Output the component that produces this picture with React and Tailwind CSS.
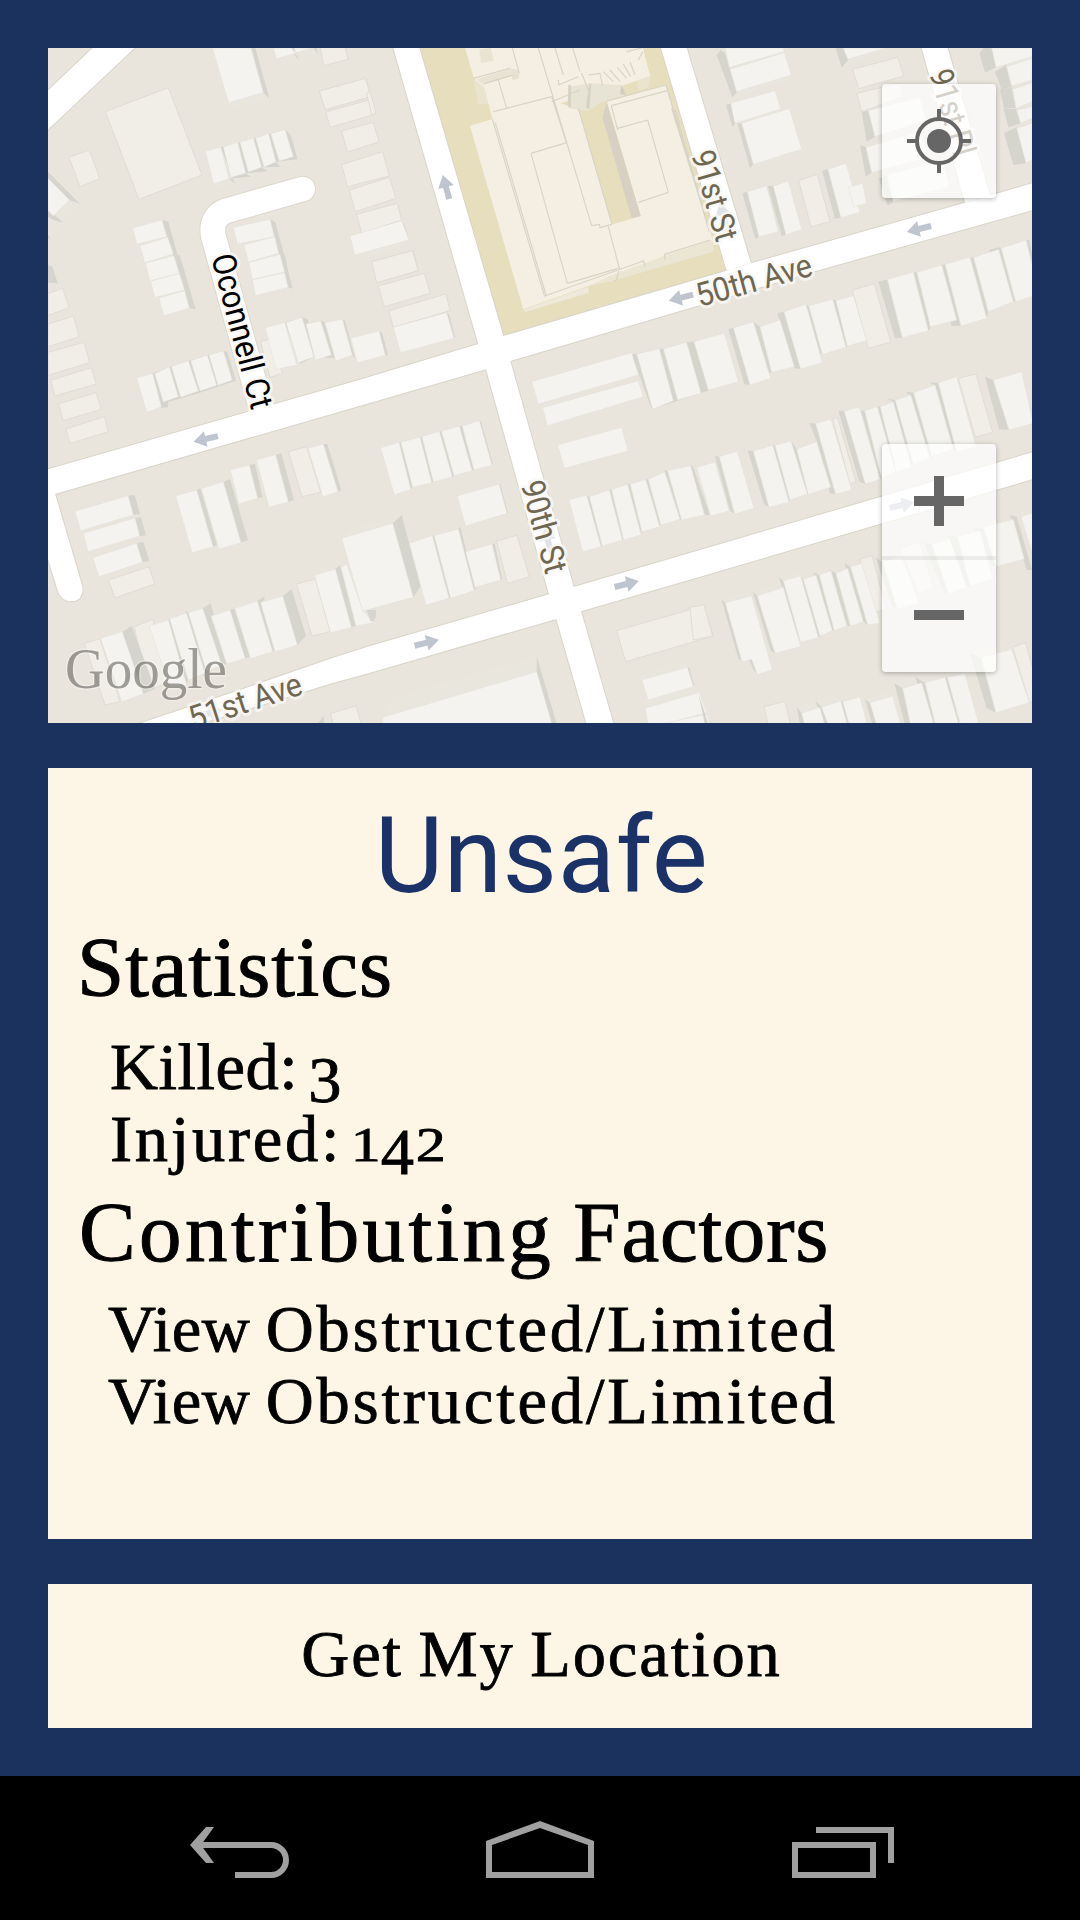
import React from "react";

// Each district is described on its own grid (3 units per pixel) and placed by its origin.
const DISTRICTS = [
  {
    origin: [40, 40],
    flats: [
      "838,153 977,115 992,170 856,209", "857,216 994,178 1008,222 871,262",
      "838,10 912,10 924,58 851,77", "196,215 385,143 486,405 297,478", "87,352 148,330 179,416 120,440",
      "24,760 68,745 88,803 24,826", "24,852 100,829 118,890 24,920", "24,937 132,907 149,968 24,1006",
      "32,1021 154,983 169,1032 45,1068", "996,665 1120,632 1134,692 1010,728",
      "662,905 700,893 727,1000 690,1012",
    ],
    fronts: [
      "566,188 670,158 688,175 582,207", "88,480 120,492 70,548 40,528", "24,530 70,548 30,595 24,590",
      "708,56 768,40 776,60 725,77", "776,40 830,24 834,40 790,56",
      "521,432 760,350 773,358 540,444",
    ],
    shades: [
      "633,24 646,24 688,175 670,158", "550,321 735,268 752,284 773,358 708,366 722,380 665,382 682,394 617,400 632,410 567,416 585,430 542,321",
      "366,540 385,545 413,645 419,646 437,705 450,750 467,808 448,804", "690,538 706,546 731,640 735,646 745,695 758,746 744,742",
      "24,395 120,492 88,480 24,415", "24,510 50,530 70,548 40,540 24,530", "24,675 38,680 53,730 24,728", "24,586 33,597 24,594",
      "755,24 770,24 764,38 779,60 768,52", "820,24 830,24 834,42",
      "734,848 786,832 804,838 806,850 842,842 854,846 884,955 822,950 780,972", "907,838 915,842 945,955 937,945",
      "338,1001 388,980 445,962 502,945 550,932 562,936 588,1022 480,1058 385,1086 384,1102 364,1104",
    ],
    roofs: [
      "517,24 633,24 670,158 566,188", "700,24 752,24 768,40 708,56", "768,38 762,24 818,24 820,24",
      "496,334 542,321 567,416 521,432", "550,321 593,307 617,400 573,412", "600,307 640,294 665,382 625,396", "647,294 686,281 708,366 672,381", "692,281 735,268 760,350 718,363",
      "278,564 366,540 380,590 290,612", "300,617 383,592 400,642 314,668", "316,670 402,647 418,700 330,722", "332,724 418,700 434,750 344,772", "357,774 434,752 448,804 372,827",
      "580,562 690,538 703,590 592,612", "612,615 704,590 716,640 625,666", "627,668 720,643 734,696 637,718", "637,720 734,698 744,742 646,767",
      "24,415 88,480 40,528 24,512",
      "676,863 734,848 770,975 708,988", "738,848 786,832 822,950 775,968", "798,852 842,842 874,945 826,960", "855,848 907,838 937,945 888,963", "933,895 1018,873 1038,945 952,968",
      "290,1013 338,1001 364,1100 320,1117", "344,1001 388,980 415,1070 370,1086", "394,979 445,962 475,1053 422,1072", "452,962 502,945 530,1036 480,1053", "507,945 550,932 577,1020 534,1036",
    ],
  },
  {
    origin: [370, 40],
    flats: [
      "-85,273 10,247 27,306 -68,336", "-85,374 38,335 58,408 -68,440", "-62,450 58,412 78,475 -44,515", "-40,523 82,490 95,540 -25,580",
      "5,665 128,632 144,692 20,728", "25,738 163,700 181,760 43,800", "57,812 228,762 240,812 70,862",
      "-152,153 -13,115 2,170 -134,209", "-10,160 0,156 18,218 5,224",
    ],
    fronts: ["-46,645 117,600 119,608 -40,660"],
    shades: ["95,542 105,556 119,605 117,600", "230,818 237,822 256,892 252,895", "28,875 36,877 54,945 46,946", "785,942 797,942 868,926 878,926 950,907 972,905 1020,1050 915,1085 845,1108"],
    roofs: [
      "-60,588 95,542 117,600 -46,645", "70,862 230,818 252,895 92,938",
      "485,1025 785,938 805,1005 505,1092", "518,1103 805,1022 820,1070 532,1157",
      "800,942 868,926 910,1082 848,1108", "880,926 950,907 993,1060 923,1080",
    ],
  },
  {
    origin: [700, 40],
    flats: [
      "458,88 594,52 611,108 476,146", "470,160 600,130 612,170 485,215", "296,422 352,403 390,545 333,560", "457,750 523,731 572,906 505,925",
    ],
    fronts: ["110,155 274,105 270,118 97,170", "160,373 305,328 300,340 150,385", "443,58 560,24 580,24 425,83", "888,82 996,50 996,62 855,98"],
    shades: [
      "50,45 62,30 75,40 112,155 97,172", "78,195 92,190 105,250 97,262", "112,250 125,250 160,373 150,385", "407,24 430,24 445,60 425,83",
      "485,215 505,212 525,290 500,305", "480,315 498,322 515,398 497,410", "537,415 560,405 580,485 562,497",
      "127,460 142,455 177,590 166,598", "203,438 220,438 258,585 245,588", "366,392 384,388 423,533 405,537",
      "838,40 850,24 875,24 888,82 855,98", "885,95 918,75 935,140 905,150", "900,150 935,142 948,205 912,205", "910,205 948,208 962,250 925,262", "912,280 950,262 978,370 940,375",
      "85,868 100,863 160,845 180,860 215,997 150,1035 133,1033", "232,820 252,815 302,987 283,985", "318,793 325,797 367,943 360,940", "398,778 408,782 442,918 438,922",
      "535,725 562,718 607,893 585,895", "640,697 650,697 694,860 685,872", "725,675 735,673 783,858 755,858 752,845 770,840", "810,652 820,652 865,815 860,835", "866,630 896,622 903,625 945,785 940,785", "978,600 988,600 996,640 996,665", "-28,905 -18,905 25,1050 15,1050",
    ],
    roofs: [
      "75,24 250,24 253,35 88,82", "90,88 253,38 274,105 110,155", "92,190 225,152 242,207 105,250", "125,250 268,205 305,328 160,373", "430,24 560,24 443,58",
      "505,212 660,172 680,240 525,290", "498,322 660,275 690,350 515,398", "560,405 730,360 748,440 580,485",
      "142,455 200,438 235,575 177,590", "220,438 265,423 305,568 258,585", "384,388 438,370 480,517 423,533", "445,442 488,430 500,490 460,500",
      "875,24 996,24 996,50 888,82", "920,80 996,55 996,120 935,138", "938,148 996,128 996,185 948,205", "950,210 996,200 996,235 962,250", "950,265 996,250 996,360 978,368",
      "-18,905 73,880 115,1025 25,1050", "100,863 160,845 212,1015 150,1035", "180,860 240,840 283,980 215,997", "252,815 318,793 367,968 302,987", "327,797 398,778 438,922 367,943", "408,782 460,767 500,902 442,918",
      "562,718 640,697 685,872 607,893", "651,697 725,675 770,840 691,860", "736,673 810,652 860,835 783,858", "821,652 896,628 940,785 865,815", "904,625 978,600 1000,690 1000,768 948,785",
    ],
  },
  {
    origin: [40, 380],
    flats: [
      "55,72 168,38 184,88 70,122", "77,147 193,110 205,155 91,190", "745,215 800,200 842,337 786,350", "206,600 327,560 344,612 224,654",
      "770,612 826,597 870,755 816,768", "133,790 180,776 240,965 195,975", "282,740 338,718 390,905 330,930", "872,1000 948,978 965,1035 880,1035",
    ],
    fronts: ["180,776 275,738 247,755 182,780", "389,716 488,670 512,670 488,685", "823,585 900,550 886,567", "514,708 582,680 570,690", "662,665 755,628 728,648"],
    shades: [
      "264,347 284,344 300,402 280,405", "285,414 303,412 318,466 299,468", "288,490 310,486 328,542 309,547",
      "470,330 482,326 531,496 519,500", "550,305 570,297 624,480 603,488", "628,255 645,252 668,352 653,355", "707,224 724,220 762,360 745,366", "850,192 862,192 904,330 894,335",
      "247,755 275,738 345,925 310,942", "385,720 389,716 445,900 440,915", "436,690 445,698 500,875 490,890", "488,685 512,670 522,705 512,708 560,852 545,855", "570,690 582,685 630,832 615,835",
      "652,663 674,648 672,660 662,668 704,812 698,815", "728,648 755,628 798,768 772,795", "886,567 900,555 948,738 934,742", "985,690 1008,690 1008,712 996,728", "835,1029 850,1008 853,1029",
    ],
    roofs: [
      "105,394 264,347 280,405 122,452", "130,460 285,414 299,468 144,515", "158,533 290,490 307,547 177,590",
      "407,347 470,330 519,500 456,518", "484,326 550,305 603,488 537,507", "571,270 628,255 653,355 597,372", "649,240 707,224 745,366 687,382", "804,205 850,192 894,335 849,350",
      "182,775 247,755 310,942 245,965", "328,738 385,720 440,915 390,925", "389,716 440,700 495,880 445,900", "445,698 488,685 545,855 500,875", "514,708 570,690 615,835 560,852",
      "585,685 652,663 698,815 632,836", "662,668 728,648 772,795 705,815", "823,585 886,567 934,742 872,758", "903,562 920,553 968,690 1000,728 948,738",
    ],
  },
  {
    origin: [370, 380],
    flats: ["380,483 441,466 478,590 412,610", "740,752 1002,677 1030,768 767,845"],
    fronts: ["-85,475 -50,445 95,405 68,430", "38,1012 62,955 500,828 500,875", "118,490 187,465 262,440 265,447", "810,885 940,842 952,862 816,900", "820,985 825,960 970,920 988,937"],
    shades: [
      "87,187 92,187 128,322 122,328", "150,172 155,170 190,305 185,308", "208,154 214,154 252,287 247,294", "268,138 276,138 312,270 306,272", "328,122 333,124 369,252 366,255",
      "387,312 391,312 414,398 411,400", "68,430 95,405 152,618 130,652", "187,467 192,467 242,655 237,655", "265,447 271,440 317,628 312,630", "366,492 374,490 397,598 392,600",
      "500,828 560,1032 546,1032 500,875", "-10,690 18,690 18,708 2,725", "952,862 958,862 972,915 970,920",
      "650,345 658,350 697,498 693,500", "718,328 724,328 760,480 757,480", "772,312 780,313 815,452 815,465", "826,296 834,298 872,435 870,440", "883,270 892,272 935,420 930,418", "960,257 968,257 1020,405 1005,405",
    ],
    roofs: [
      "32,203 87,187 122,328 73,345", "93,187 150,172 185,308 128,322", "156,170 208,154 247,291 190,305", "215,154 268,138 306,272 252,287", "277,138 328,122 366,255 312,270",
      "262,348 387,312 411,400 286,438", "118,490 187,467 237,655 168,675", "193,467 265,447 312,632 242,655", "287,515 366,492 392,600 315,622",
      "-85,475 68,430 130,652 -22,693", "563,195 755,142 774,213 583,265",
      "597,360 650,345 693,500 638,515", "658,350 718,330 757,480 697,498", "725,328 773,313 813,465 761,480", "781,313 827,298 869,440 816,455", "835,298 884,275 930,418 873,435", "893,272 962,257 1003,405 935,420",
      "816,900 952,862 970,920 834,960", "825,985 988,937 1010,998 836,1045", "838,1040 1012,1002 1020,1040",
      "38,1012 500,875 546,1032 38,1032",
    ],
  },
  {
    origin: [700, 380],
    flats: ["775,-5 828,-18 878,157 826,172", "480,538 516,527 560,690 527,695", "600,505 660,487 700,625 655,640", "192,980 255,964 272,1035 205,1035", "398,118 412,112 468,305 450,312", "938,802 976,788 1000,870 1000,965 988,968", "-30,682 12,675 38,768 -20,780"],
    fronts: ["64,658 145,632 155,648 76,668", "158,635 240,610 250,622 172,648", "236,592 300,575 302,588 250,602", "305,1000 290,985 340,962 365,982", "365,982 348,962 400,942 422,962", "583,910 640,890 665,908 608,925", "495,958 560,940 578,948 510,968", "810,820 900,795 935,808 843,832", "930,405 996,388 996,400 950,410"],
    shades: [
      "143,212 160,213 207,382 192,372", "45,228 57,230 104,402 90,392", "218,196 225,196 270,360 267,366", "273,183 290,207 325,343 322,342", "328,130 347,130 407,343 390,340 350,182",
      "415,92 432,93 496,312 478,305", "483,92 493,92 545,295 540,298", "532,80 540,80 590,277 587,275", "560,55 585,60 640,255 632,255 580,66", "615,35 640,38 695,228 690,235 632,45", "685,8 715,8 770,215 760,208 705,15", "855,-10 880,0 927,150 897,148",
      "64,658 76,668 126,845 115,835", "148,838 155,838 172,883 160,870", "158,635 172,648 225,820 212,812", "236,592 250,602 302,787 297,775", "302,588 310,598 360,768 355,773", "340,577 358,585 403,752 397,752", "387,568 408,580 450,738 443,738", "433,550 452,560 503,735 490,725",
      "527,533 548,545 592,687 575,675", "672,488 695,492 745,642 728,630", "742,465 772,470 810,618 800,622", "817,440 850,448 888,560 878,560", "930,405 950,410 996,570 980,570",
      "290,980 305,1000 315,1035 300,1035", "345,960 365,982 385,1035 375,1035", "422,962 428,964 450,1035 442,1035", "495,958 510,968 530,1035 518,1035", "583,910 608,925 632,1035 615,1035", "645,890 675,908 705,1035 700,1035", "735,892 742,892 780,1035 775,1035",
      "810,820 843,832 888,998 860,985", "-5,940 15,1000 25,1035 15,1035",
    ],
    roofs: [
      "-10,262 45,246 88,393 32,408", "58,230 112,214 162,385 104,402",
      "160,213 218,196 267,366 207,382", "225,196 273,183 322,342 270,360", "290,207 350,185 392,322 325,343", "347,130 393,118 455,330 407,343",
      "433,93 478,82 540,298 496,312", "494,92 532,80 587,275 545,295", "541,80 580,66 635,262 590,277", "586,60 632,45 690,235 640,255", "641,38 705,15 760,208 695,228", "715,8 770,-10 828,200 770,215", "880,0 965,-25 1000,130 927,150",
      "76,668 155,648 217,870 172,883 155,838 126,845", "172,648 250,622 302,800 225,820", "250,602 302,588 355,773 302,787", "310,598 348,585 397,752 360,768", "358,585 393,572 440,738 403,752", "408,580 443,565 490,725 452,738", "452,560 485,550 540,730 503,735",
      "548,545 605,530 657,670 592,687", "695,492 750,478 800,622 745,642", "772,470 840,452 878,598 810,618", "850,440 940,418 973,537 888,560", "963,410 1000,398 1000,530",
      "305,1000 360,982 374,1035 314,1035", "365,982 422,962 442,1035 385,1035", "428,964 480,952 502,1035 448,1035", "510,968 578,948 602,1035 530,1035",
      "608,925 665,908 702,1035 632,1035", "675,908 735,892 777,1035 707,1035", "742,892 795,880 837,1035 782,1035", "843,832 935,808 988,968 888,998",
    ],
  },
];

const ROADS = [
  "40,98.2 101,40 143,40 40,137",
  "391,40 478.3,344 486,369.3 549,594.3 556.3,619 588,729 615,729 581,611.3 573.7,587 510.3,361 503.3,336 417,40",
  "40,471.5 359,380 478.3,344 503.3,336 726.7,270.7 751,263.3 965,202.7 990,195.5 1040,181 1040,208 816.7,270.7 510.3,361 486,369.3 380,400 55,494 40,498",
  "658.7,40 726.7,270.7 751,263.3 684.3,40",
  "919.4,40 965,202.7 990,195.5 945.3,40",
  "120,730 240,690 331.7,658.3 370,646 549,594.3 573.7,587 700,550 1040,450 1040,477 700,576.7 581,611.3 556.3,619 370,672.7 331.7,683.3 180,730",
  "40,480 51,480 82.5,587 82.5,592 80,598 75,601 69,601.3 63,599 58.5,593 40,533",
];

const ARROWS = [
  [446, 187, -105, 1], [919, 229, 166, 1], [681, 297.7, 166, 1], [205.7, 439, 167, 1],
  [626.7, 584, -14, 1], [426.7, 642.7, -14, 1], [902, 505, -14, 1],
  [210, 713, -16, 0.45], [547.7, 540, -105, 0.5], [723, 215, -105, 0.5], [949, 101, -105, 0.3],
];

const LABELS = [
  { text: "Oconnell Ct", x: 211, y: 257, rotate: 75.2, length: 159, fill: "#000" },
  { text: "91st St", x: 691, y: 154, rotate: 74, length: 93, fill: "#6f6752" },
  { text: "90th St", x: 520.5, y: 484, rotate: 74.5, length: 95, fill: "#6f6752" },
  { text: "91st Pl", x: 929, y: 73, rotate: 73.5, length: 89, fill: "#6f6752" },
  { text: "50th Ave", x: 699.5, y: 307, rotate: -15.5, length: 119, fill: "#6f6752" },
  { text: "51st Ave", x: 193, y: 730, rotate: -18, length: 117, fill: "#6f6752" },
];

const SCHOOL_LINES =
  "M370,215 545,170 M367,237 524,770 M376,248 528,765 M385,120 410,205 M505,24 665,557 M545,170 590,310 M555,24 580,105 M608,24 630,95 M427,24 448,100 M565,135 625,110 M565,120 567,137 M310,115 420,85 M345,130 430,105 M483,340 590,308 M483,340 592,730 M524,768 820,663 M592,730 745,685 M820,660 825,680 M715,560 748,685 740,720 733,723 M665,557 688,553 690,563 726,553 M625,205 726,553 M724,197 743,270 M710,183 888,135 M724,197 892,152 M743,265 833,240 M833,240 895,457 M805,487 895,457 M905,205 1015,560 M915,210 1010,545 M888,135 1018,575 M883,643 1020,600 M883,643 886,660 M770,35 815,24 M805,60 818,35 M780,66 795,105 M635,100 655,150 M655,105 690,100 697,135 M700,95 730,125 M720,90 750,125 M742,82 770,115 M760,72 782,110 M545,185 630,150";

function District({ origin, flats, fronts, shades, roofs }) {
  return (
    <g transform={`translate(${origin[0]} ${origin[1]}) scale(0.33333)`}>
      {flats.map((p) => <polygon key={p} points={p} fill="#f1eee8" stroke="#dddad1" strokeWidth="2.5" />)}
      {fronts.map((p) => <polygon key={p} points={p} fill="#e9e6de" />)}
      {shades.map((p) => <polygon key={p} points={p} fill="#d6d5cd" />)}
      {roofs.map((p) => <polygon key={p} points={p} fill="#f4f3ef" stroke="#e2e0d9" strokeWidth="1.5" />)}
    </g>
  );
}

function School() {
  return (
    <g>
      <polygon points="417,40 658.7,40 726.7,270.7 503.3,336" fill="#e7debd" />
      <g transform="translate(370 40) scale(0.33333)">
        <polygon points="310,115 345,105 365,190 325,195" fill="#e9e3d0" />
        <polygon points="800,118 842,105 835,140 806,152" fill="#e9e3d0" />
        <polygon points="460,810 655,740 657,758 466,816" fill="#efe9db" />
        <polygon points="524,765 1030,600 1030,635 730,722 655,738 524,778" fill="#ebe5d4" />
        <polygon points="300,258 367,237 343,142 312,116 284,20 818,20 840,108 755,138 570,190 625,205 726,553 812,528 710,185 888,135 1028,600 883,648 720,708 655,738 460,808" fill="#f5efe3" />
        <polygon points="625,205 655,213 690,190 768,165 710,185 812,528 726,553" fill="#e7debd" />
        <polygon points="595,140 660,130 755,135 768,165 690,190 655,213 595,205" fill="#e7e3d5" />
        <polygon points="595,135 603,135 603,203 593,198" fill="#d6d3c5" />
        <polygon points="657,135 664,130 658,208 648,202" fill="#d6d3c5" />
        <polygon points="755,135 768,165 750,162" fill="#d1cdc0" />
        <polygon points="328,28 362,24 372,62 333,70" fill="#e9e3d2" />
        <polygon points="420,85 445,90 448,115 428,120" fill="#e6e1d0" />
        <polygon points="320,118 420,88 424,108 340,135" fill="#e8e3d3" />
        <polygon points="710,185 697,232 785,535 812,528" fill="#d8d1c3" />
        <path d={SCHOOL_LINES} fill="none" stroke="#d8d4c5" strokeWidth="3.5" />
      </g>
    </g>
  );
}

function StreetMap() {
  const court = "M788 447 L560 512 Q510 530 520 588 L668 1118";
  return (
    <svg viewBox="48 48 984 675" className="block h-full w-full">
      <rect x="48" y="48" width="984" height="675" fill="#e9e5dd" />
      <School />
      {DISTRICTS.map((d) => <District key={d.origin.join()} {...d} />)}
      <g fill="none" stroke="#d8d5c9" strokeWidth="2">
        {ROADS.map((p) => <polygon key={p} points={p} />)}
      </g>
      <g transform="translate(40 40) scale(0.33333)" fill="none" strokeLinecap="round">
        <path d={court} stroke="#dcd8cc" strokeWidth="80" />
      </g>
      <g fill="#fff">
        {ROADS.map((p) => <polygon key={p} points={p} />)}
      </g>
      <g transform="translate(40 40) scale(0.33333)" fill="none" strokeLinecap="round">
        <path d={court} stroke="#fff" strokeWidth="74" />
      </g>
      {ARROWS.map(([x, y, angle, alpha]) => (
        <path key={`${x}-${y}`} transform={`translate(${x} ${y}) rotate(${angle})`} d="M-12.5-3H0V-8L12.5 0 0 8V3H-12.5Z" fill="#bfc5cf" opacity={alpha} />
      ))}
      {LABELS.map((l) => (
        <text key={l.text} transform={`translate(${l.x} ${l.y}) rotate(${l.rotate})`} textLength={l.length} lengthAdjust="spacingAndGlyphs" fontFamily="Roboto, sans-serif" fontSize="33" fill={l.fill} stroke="#f9f8f4" strokeOpacity="0.8" strokeWidth="6" strokeLinejoin="round" paintOrder="stroke">
          {l.text}
        </text>
      ))}
      <text x="65" y="688" textLength="162" lengthAdjust="spacingAndGlyphs" fontFamily="'Liberation Serif', serif" fontSize="56" fill="#6c6963" stroke="#fff" strokeOpacity="0.6" strokeWidth="2.5" paintOrder="stroke" opacity="0.62">
        Google
      </text>
    </svg>
  );
}

function LocateButton() {
  return (
    <button aria-label="My location" className="absolute right-9 top-9 flex size-[114px] items-center justify-center rounded bg-white/70 shadow-[0_1px_5px_rgba(0,0,0,0.3)]">
      <svg viewBox="-32 -32 64 64" className="size-16" stroke="#666" strokeWidth="4" fill="none">
        <circle r="22" />
        <circle r="12" fill="#666" stroke="none" />
        <path d="M-32 0h9M32 0h-9M0-32v9M0 32v-9" strokeWidth="4" />
      </svg>
    </button>
  );
}

function ZoomControls() {
  return (
    <div className="absolute bottom-[51px] right-9 flex h-[228px] w-[114px] flex-col rounded bg-white/70 shadow-[0_1px_5px_rgba(0,0,0,0.3)]">
      <button aria-label="Zoom in" className="flex h-[112px] items-center justify-center pt-[2px]">
        <svg viewBox="0 0 50 50" className="size-[50px]" fill="#666"><path d="M20 0h10v20h20v10H30v20H20V30H0V20h20z" /></svg>
      </button>
      <div className="h-1 bg-[#666]/10" />
      <button aria-label="Zoom out" className="flex h-[112px] items-start justify-center pt-[50px]">
        <svg viewBox="0 0 50 10" className="h-[10px] w-[50px]" fill="#666"><path d="M0 0h50v10H0z" /></svg>
      </button>
    </div>
  );
}

function NavBar() {
  return (
    <nav className="h-36 bg-black">
      <svg viewBox="0 1776 1080 144" className="block h-full w-full" fill="#a0a0a0">
        <path d="M190 1845 206 1827H214L201 1845 214 1863H206Z" />
        <path d="M199 1845H271A15 15 0 0 1 271 1875H235" fill="none" stroke="#a0a0a0" strokeWidth="6" />
        <path fillRule="evenodd" d="M486 1841 540 1821 594 1841V1878H486ZM492 1845V1872H588V1845L540 1828Z" />
        <path d="M795 1845H873V1875H795ZM816 1830H891V1863" fill="none" stroke="#a0a0a0" strokeWidth="6" />
      </svg>
    </nav>
  );
}

const HEADING = "w-max whitespace-nowrap text-[85px] leading-[96px] [-webkit-text-stroke:1px_black]";
const ROW = "w-max whitespace-nowrap text-[66.5px] leading-[72px] [-webkit-text-stroke:0.8px_black]";

function Factor({ className = "" }) {
  return (
    <p className={`${ROW} pl-[60px] tracking-[2.85px] ${className}`}>
      <span className="tracking-[0.6px] [word-spacing:-2px]">View </span>Obstructed/Limited
    </p>
  );
}

export default function App() {
  return (
    <main className="flex h-[1920px] w-[1080px] flex-col overflow-hidden bg-[#1b325f] font-['Liberation_Serif',serif] text-black">
      <div className="flex flex-1 flex-col gap-[45px] p-12">
        <section className="relative h-[675px] overflow-hidden">
          <StreetMap />
          <LocateButton />
          <ZoomControls />
        </section>

        <section className="flex h-[771px] flex-col bg-[#fdf5e6] pt-[26px]">
          <h1 className="pl-[3px] text-center font-['Roboto',sans-serif] text-[105.5px] leading-[124px] tracking-[0.6px] text-[#1a3268]">Unsafe</h1>
          <h2 className={`${HEADING} mt-px pl-[29px] tracking-[0.9px]`}>Statistics</h2>
          <p className={`${ROW} mt-4 pl-[62px] tracking-[0.5px]`}>
            Killed:<span className="relative top-[13px] ml-[10px]">3</span>
          </p>
          <p className={`${ROW} pl-[62px] tracking-[2.7px]`}>
            Injured:<span className="ml-3 inline-block scale-x-125 text-[48px] leading-none">1</span>
            <span className="relative top-[13px] tracking-normal">4</span>
            <span className="ml-[5px] inline-block scale-x-125 text-[48px] leading-none">2</span>
          </p>
          <h2 className={`${HEADING} mt-[9px] pl-[31px] tracking-[0.8px] [word-spacing:-3px]`}>
            <span className="tracking-[3.4px]">Contributing</span> Factors
          </h2>
          <Factor className="mt-[13px]" />
          <Factor />
        </section>

        <button className="flex h-36 items-center justify-center bg-[#fdf5e6] pb-1 pl-[3px] text-[66.5px] leading-[72px] tracking-[1.9px] [-webkit-text-stroke:0.8px_black] [word-spacing:-3px]">
          Get My Location
        </button>
      </div>
      <NavBar />
    </main>
  );
}
